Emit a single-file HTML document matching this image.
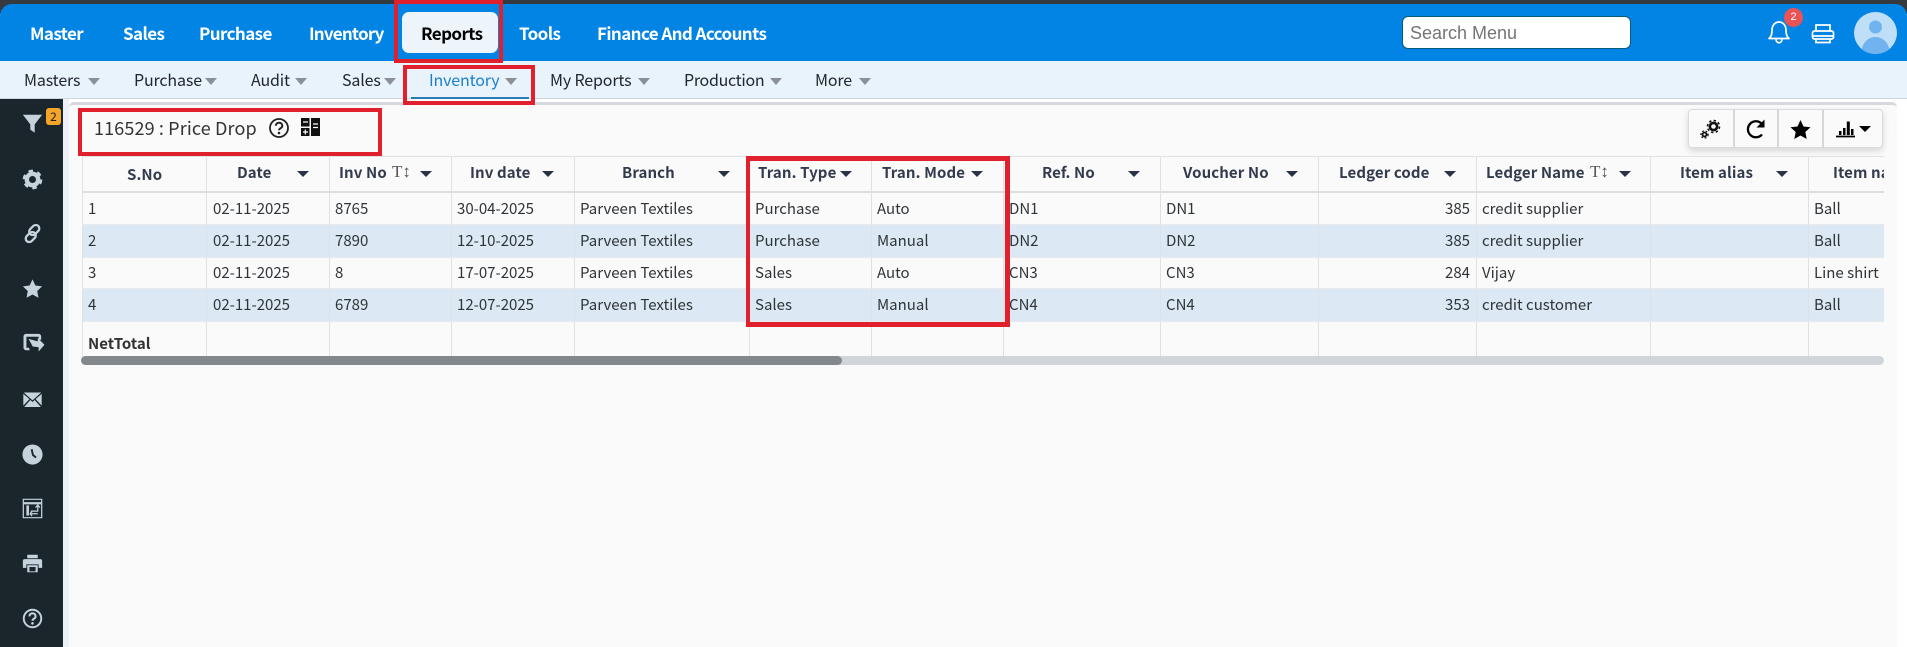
<!DOCTYPE html>
<html><head><meta charset="utf-8"><title>Price Drop</title>
<style>
*{box-sizing:border-box}
html,body{margin:0;padding:0;width:1907px;height:647px;overflow:hidden;background:#fff;font-family:"Noto Sans CJK JP","Liberation Sans",sans-serif}
.a{position:absolute;white-space:nowrap}
#dark{left:0;top:0;width:1907px;height:14px;background:#353a3e}
#nav{left:0;top:4px;width:1907px;height:57px;background:#0284e4;border-radius:12px 12px 0 0}
.n{top:20px;line-height:26px;font-size:17px;font-weight:700;color:#fff;letter-spacing:-.6px}
#act{left:402px;top:12px;width:96px;height:41px;background:#edf5fb;border-radius:7px}
#sub{left:0;top:61px;width:1907px;height:38px;background:#e9f3fb;border-bottom:1px solid #cfd7de}
.s{top:68px;line-height:22px;font-size:16px;letter-spacing:-.15px;color:#22272b}
.ar{width:0;height:0;border-left:6.5px solid transparent;border-right:6.5px solid transparent;border-top:7px solid #8b9096;top:78px}
#side{left:0;top:99px;width:63px;height:548px;background:#1b252c}
#strip{left:63px;top:99px;width:6px;height:548px;background:#eef2f7}
#panel{left:69px;top:102px;width:1828px;height:545px;background:#fafafa;border-top:3px solid #d5d9de;border-radius:5px 5px 0 0}
#rstrip{left:1897px;top:99px;width:10px;height:548px;background:#fff}
.r{background:#e1202d}
#wrap{position:absolute;left:82px;top:156px;width:1802px;height:209px;overflow:hidden}
table{position:absolute;left:0;top:0;width:1876px;table-layout:fixed;border-collapse:collapse;font-size:15px;color:#2f3438}
td,th{border:0;border-left:1px solid #dfe1e4;padding:0 0 0 5px;white-space:nowrap;overflow:hidden;font-weight:400}
td:nth-child(2){padding-left:6px}
thead th{height:35px;border-top:1px solid #dfe1e4;border-bottom:2px solid #dcdee1;position:relative;font-weight:700;color:#333a4d;padding:0}
th span{position:absolute;top:5px;line-height:22px;font-size:15px;letter-spacing:.1px}
th i{position:absolute;top:14px;width:0;height:0;border-left:6px solid transparent;border-right:6px solid transparent;border-top:6.5px solid #2a3245}
th b{position:absolute;top:4px;line-height:22px;font-size:17px;font-weight:400;color:#555;font-family:"Liberation Serif",serif}
.o td{background:#fafafa}
.e td{background:#dce9f4}
tbody tr td{border-bottom:1px solid #e6eaee;line-height:20px}
.n1{height:31px}.n2{height:33px}
.f td{padding-top:2px;height:33px}
.net td{height:45px;background:#fafafa;border-bottom:0;vertical-align:top;padding-top:12px;font-weight:700;color:#333}
.ra{text-align:right;padding-right:6px}
.ic{position:absolute;left:22px;width:21px;height:21px;fill:#c6d3dc}
</style></head><body>

<div class="a" id="dark"></div>
<div class="a" id="nav"></div>
<div class="a" id="act"></div>
<div class="a n" style="left:30px">Master</div>
<div class="a n" style="left:123px">Sales</div>
<div class="a n" style="left:199px">Purchase</div>
<div class="a n" style="left:309px;letter-spacing:-.8px">Inventory</div>
<div class="a n" style="left:421px;color:#000">Reports</div>
<div class="a n" style="left:519px">Tools</div>
<div class="a n" style="left:597px">Finance And Accounts</div>

<div class="a" style="left:1402px;top:16px;width:229px;height:33px;background:#fff;border:1px solid #0a5a7c;border-radius:6px;font:18px/32px 'Liberation Sans',sans-serif;color:#757575;padding-left:7px">Search Menu</div>

<svg class="a" style="left:1766px;top:18px" width="26" height="27" viewBox="0 0 26 27" fill="none" stroke="#fff" stroke-width="1.7"><path d="M3 20.5c2.5-2 3-4.500 3-8.500 0-4.500 3-8 7-8s7 3.500 7 8c0 4 .5 6.500 3 8.500z" stroke-linejoin="round"/><path d="M10 21c0 5 6 5 6 0"/></svg>
<div class="a" style="left:1784px;top:8px;width:19px;height:19px;border-radius:50%;background:#ea5356;color:#fff;font:11px/19px 'Liberation Sans',sans-serif;text-align:center">2</div>
<svg class="a" style="left:1811px;top:23px" width="24" height="21" viewBox="0 0 24 21" fill="none" stroke="#fff" stroke-width="1.7"><path d="M5 8V2h14v6"/><rect x="1.500" y="8" width="21" height="8" rx="2"/><path d="M5 16v3.500h14V16"/><path d="M2 13h20"/></svg>
<svg class="a" style="left:1854px;top:12px" width="43" height="42" viewBox="0 0 43 42"><defs><clipPath id="av"><ellipse cx="21.500" cy="21" rx="21.500" ry="21"/></clipPath></defs><ellipse cx="21.500" cy="21" rx="21.500" ry="21" fill="#bfdff9"/><circle cx="21.500" cy="15" r="6.500" fill="#71b3ee"/><ellipse clip-path="url(#av)" cx="21.500" cy="40" rx="14" ry="15" fill="#71b3ee"/></svg>

<div class="a" id="sub"></div>
<div class="a s" style="left:24px">Masters</div><div class="a ar" style="left:88px"></div>
<div class="a s" style="left:134px">Purchase</div><div class="a ar" style="left:205px"></div>
<div class="a s" style="left:251px">Audit</div><div class="a ar" style="left:295px"></div>
<div class="a s" style="left:342px">Sales</div><div class="a ar" style="left:384px"></div>
<div class="a s" style="left:429px;color:#1b7fd0">Inventory</div><div class="a ar" style="left:505px"></div>
<div class="a" style="left:411px;top:97px;width:118px;height:2px;background:#2a7cb6"></div>
<div class="a s" style="left:550px">My Reports</div><div class="a ar" style="left:638px"></div>
<div class="a s" style="left:684px;letter-spacing:-.3px">Production</div><div class="a ar" style="left:770px"></div>
<div class="a s" style="left:815px">More</div><div class="a ar" style="left:859px"></div>

<div class="a" id="side"></div>
<div class="a" id="strip"></div>
<div class="a" id="panel"></div>
<div class="a" id="rstrip"></div>

<svg class="ic" style="top:113px" viewBox="0 0 24 24"><path d="M1 2h22L14.500 13v9.500L9.500 19v-6z"/></svg>
<div class="a" style="left:46px;top:108px;width:15px;height:17px;background:#f4a428;border-radius:3px;color:#222;font-size:12px;line-height:17px;text-align:center">2</div>
<svg class="ic" style="top:169px" viewBox="0 0 24 24"><circle cx="12" cy="12" r="6.500" fill="none" stroke="#c6d3dc" stroke-width="5"/><circle cx="12" cy="12" r="9.500" fill="none" stroke="#c6d3dc" stroke-width="3.500" stroke-dasharray="5 5"/></svg>
<svg class="ic" style="top:223px;fill:none" viewBox="0 0 24 24" stroke="#c6d3dc" stroke-width="2.600"><rect x="10" y="1.500" width="8" height="13" rx="4" transform="rotate(45 14 8)"/><rect x="6" y="9.500" width="8" height="13" rx="4" transform="rotate(45 10 16)"/></svg>
<svg class="ic" style="top:278px" viewBox="0 0 24 24"><path d="M12 1.500l3.300 7 7.700 1-5.600 5.300 1.400 7.700-6.800-3.700-6.800 3.700 1.400-7.700L1 9.500l7.700-1z"/></svg>
<svg class="ic" style="top:333px;left:21px;width:26px;height:21px" viewBox="0 0 27 25"><path d="M4 1h15a3 3 0 013 3v4h-3V4.500H4.500v13h3l1 3H4a3 3 0 01-3-3V4a3 3 0 013-3z"/><path d="M7 7l11 3V6l8 8-7 8v-5l-7-1z"/></svg>
<svg class="ic" style="top:389px" viewBox="0 0 24 24"><path d="M2 4h20l-10 9z"/><path d="M1.500 5.500V19l7-7.500zM22.500 5.500V19l-7-7.500zM2.500 20.500h19l-7-8-2.500 2.300-2.500-2.300z"/></svg>
<svg class="ic" style="top:444px" viewBox="0 0 24 24"><circle cx="12" cy="12" r="11.500"/><path d="M11 6l1.500 6.500 3.500 3" fill="none" stroke="#1b252c" stroke-width="2.200"/></svg>
<svg class="ic" style="top:498px" viewBox="0 0 24 24" fill="none"><path d="M1.500 1.500h21v21h-21z" fill="none" stroke="#c6d3dc" stroke-width="1.400"/><path d="M2 6h20" stroke="#c6d3dc" stroke-width="2.500"/><path d="M5 8.500h3V20H5z"/><path d="M10 15h8V9M15.500 11l2.500-3 2.500 3M9 18l2.500-2.500M9 18l2.500 2.500M9 18h9" fill="none" stroke="#c6d3dc" stroke-width="1.400"/></svg>
<svg class="ic" style="top:553px" viewBox="0 0 24 24"><path d="M6 2h12v4H6z"/><path d="M3 7h18a2 2 0 012 2v8h-4v-4H5v4H1V9a2 2 0 012-2z"/><path d="M6 14h12v8H6z"/><path d="M8.500 16h7v5h-7z" fill="#1b252c"/></svg>
<svg class="ic" style="top:608px;fill:none" viewBox="0 0 24 24"><circle cx="12" cy="12" r="10" stroke="#c6d3dc" stroke-width="2.200"/><path d="M8.500 9.500c0-4.500 7-4.500 7 0 0 3-3.500 2.500-3.500 5" stroke="#c6d3dc" stroke-width="2.400"/><circle cx="12" cy="17.500" r="1.500" fill="#c6d3dc"/></svg>

<div class="a" style="left:94px;top:115px;font-size:18px;letter-spacing:.13px;line-height:26px;color:#333">116529 : Price Drop</div>
<svg class="a" style="left:268px;top:117px" width="22" height="22" viewBox="0 0 22 22" fill="none"><circle cx="11" cy="11" r="9" stroke="#222" stroke-width="1.800"/><path d="M7.800 8.800c0-4 6.500-4 6.500 0 0 2.700-3.300 2.300-3.300 4.500" stroke="#222" stroke-width="2"/><circle cx="11" cy="16" r="1.300" fill="#222"/></svg>
<svg class="a" style="left:301px;top:118px" width="19" height="18" viewBox="0 0 19 18"><path d="M0 0h8.500v8.500H0zM10 0h9v18h-9zM0 10h8.500v8H0z" fill="#111"/><path d="M2 4h5M12 6h5M12 9.500h5M4.300 11.500v5M2 14h5" stroke="#fff" stroke-width="1.200"/></svg>

<div class="a" style="left:1688px;top:109px;width:195px;height:39px;background:#fafafa;border:1px solid #d9dcdf;border-radius:4px;box-shadow:0 3px 7px rgba(0,0,0,.14)"></div>
<div class="a" style="left:1733px;top:109px;width:1.500px;height:39px;background:#d5d7da"></div>
<div class="a" style="left:1777px;top:109px;width:1.500px;height:39px;background:#d5d7da"></div>
<div class="a" style="left:1822px;top:109px;width:1.500px;height:39px;background:#d5d7da"></div>
<svg class="a" style="left:1700px;top:119px" width="22" height="20" viewBox="0 0 22 20" fill="none" stroke="#111"><circle cx="13.500" cy="7.500" r="3.600" stroke-width="2.600"/><circle cx="13.500" cy="7.500" r="6" stroke-width="1.600" stroke-dasharray="2.400 2.300"/><circle cx="4.500" cy="15.500" r="2" stroke-width="1.800"/><circle cx="4.500" cy="15.500" r="3.600" stroke-width="1.200" stroke-dasharray="1.800 1.800"/></svg>
<svg class="a" style="left:1745px;top:119px" width="22" height="20" viewBox="0 0 22 20" fill="none"><path d="M17 15.500A8 8 0 1 1 16.500 4.500" stroke="#000" stroke-width="2.300"/><path d="M19.500 .5v8h-8z" fill="#000"/></svg>
<svg class="a" style="left:1790px;top:120px" width="21" height="19" viewBox="0 0 21 19"><path d="M10.500 0l3 6.500 7 .8-5.200 4.700 1.400 7-6.200-3.500-6.200 3.500 1.400-7L.5 7.300l7-.8z" fill="#000"/></svg>
<svg class="a" style="left:1836px;top:120px" width="36" height="18" viewBox="0 0 36 18"><path d="M0 16.500h19" stroke="#000" stroke-width="1.800"/><path d="M3 11h2.500v4H3zM7 8h2.500v7H7zM10.800 1.500h3V15h-3zM15 9h2.500v6H15z" fill="#000"/><path d="M23 6h12l-6 6z" fill="#000"/></svg>

<div id="wrap"><table>
<colgroup><col style="width:124px"><col style="width:123px"><col style="width:122px"><col style="width:123px"><col style="width:175px"><col style="width:122px"><col style="width:132px"><col style="width:157px"><col style="width:158px"><col style="width:158px"><col style="width:174px"><col style="width:158px"><col style="width:150px"></colgroup>
<thead><tr>
<th><span style="left:44px;top:7px">S.No</span></th>
<th><span style="left:30px">Date</span><i style="left:90px"></i></th>
<th><span style="left:9px">Inv No</span><b style="left:62px">T↕</b><i style="left:90px"></i></th>
<th><span style="left:18px">Inv date</span><i style="left:90px"></i></th>
<th><span style="left:47px">Branch</span><i style="left:143px"></i></th>
<th><span style="left:8px">Tran. Type</span><i style="left:90px"></i></th>
<th><span style="left:10px">Tran. Mode</span><i style="left:99px"></i></th>
<th><span style="left:38px">Ref. No</span><i style="left:124px"></i></th>
<th><span style="left:22px">Voucher No</span><i style="left:125px"></i></th>
<th><span style="left:20px">Ledger code</span><i style="left:125px"></i></th>
<th><span style="left:9px">Ledger Name</span><b style="left:113px">T↕</b><i style="left:142px"></i></th>
<th><span style="left:29px">Item alias</span><i style="left:125px"></i></th>
<th><span style="left:24px">Item name</span></th>
</tr></thead>
<tbody>
<tr class="o n1 f"><td>1</td><td>02-11-2025</td><td>8765</td><td>30-04-2025</td><td>Parveen Textiles</td><td>Purchase</td><td>Auto</td><td>DN1</td><td>DN1</td><td class="ra">385</td><td>credit supplier</td><td></td><td>Ball</td></tr>
<tr class="e n2"><td>2</td><td>02-11-2025</td><td>7890</td><td>12-10-2025</td><td>Parveen Textiles</td><td>Purchase</td><td>Manual</td><td>DN2</td><td>DN2</td><td class="ra">385</td><td>credit supplier</td><td></td><td>Ball</td></tr>
<tr class="o n1"><td>3</td><td>02-11-2025</td><td>8</td><td>17-07-2025</td><td>Parveen Textiles</td><td>Sales</td><td>Auto</td><td>CN3</td><td>CN3</td><td class="ra">284</td><td>Vijay</td><td></td><td>Line shirt</td></tr>
<tr class="e n2"><td>4</td><td>02-11-2025</td><td>6789</td><td>12-07-2025</td><td>Parveen Textiles</td><td>Sales</td><td>Manual</td><td>CN4</td><td>CN4</td><td class="ra">353</td><td>credit customer</td><td></td><td>Ball</td></tr>
<tr class="net"><td>NetTotal</td><td></td><td></td><td></td><td></td><td></td><td></td><td></td><td></td><td></td><td></td><td></td><td></td></tr>
</tbody></table></div>
<div class="a" style="left:82px;top:356px;width:1802px;height:9px;background:rgba(205,209,214,.92);border-radius:5px"></div>
<div class="a" style="left:81px;top:356px;width:761px;height:9px;background:rgba(128,132,136,.96);border-radius:5px"></div>

<div class="a r" style="left:394px;top:0;width:109px;height:4px"></div>
<div class="a r" style="left:394px;top:59px;width:109px;height:4px"></div>
<div class="a r" style="left:394px;top:0;width:4px;height:63px"></div>
<div class="a r" style="left:499px;top:0;width:4px;height:63px"></div>

<div class="a r" style="left:403px;top:65px;width:132px;height:4px"></div>
<div class="a r" style="left:403px;top:101px;width:132px;height:4px"></div>
<div class="a r" style="left:403px;top:65px;width:4px;height:40px"></div>
<div class="a r" style="left:531px;top:65px;width:4px;height:40px"></div>

<div class="a r" style="left:78px;top:108px;width:304px;height:4px"></div>
<div class="a r" style="left:78px;top:152px;width:304px;height:4px"></div>
<div class="a r" style="left:78px;top:108px;width:4px;height:48px"></div>
<div class="a r" style="left:378px;top:108px;width:4px;height:48px"></div>

<div class="a r" style="left:746px;top:156px;width:264px;height:5px"></div>
<div class="a r" style="left:746px;top:322px;width:264px;height:5px"></div>
<div class="a r" style="left:746px;top:156px;width:4px;height:171px"></div>
<div class="a r" style="left:1005px;top:156px;width:5px;height:171px"></div>
</body></html>
